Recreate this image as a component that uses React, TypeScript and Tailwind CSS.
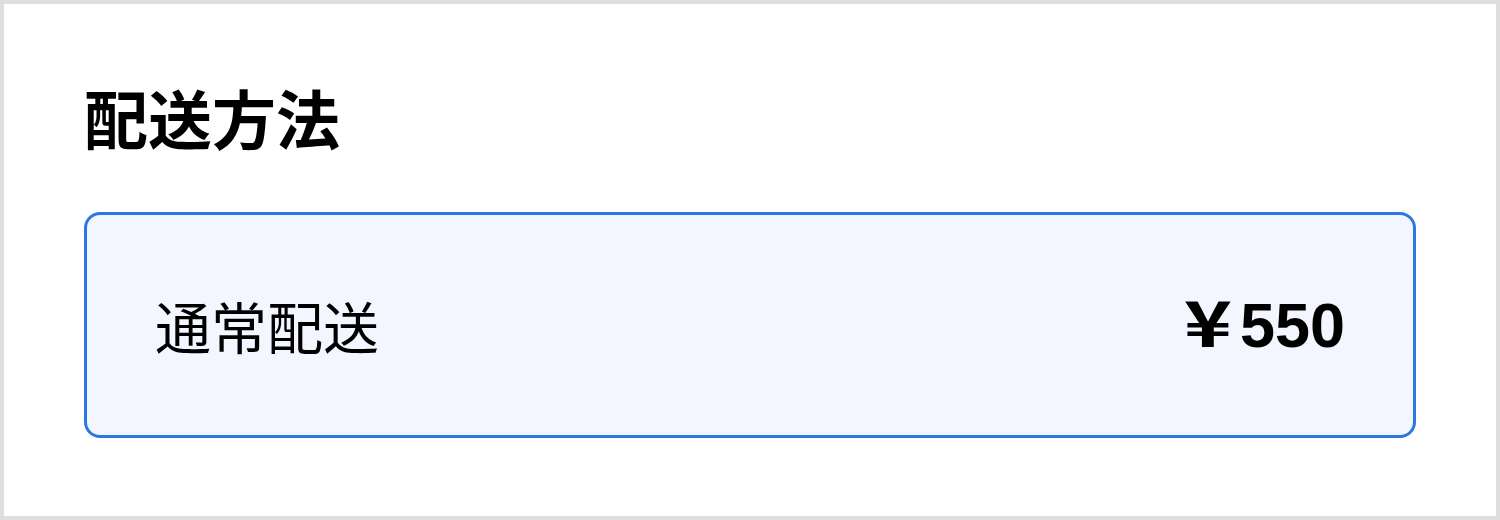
export default function App() {
  return (
    <div className="w-[1500px] h-[520px] box-border border-[4px] border-[#dedede] bg-white px-[80px] pt-[80px] font-['Noto_Sans_CJK_JP','Liberation_Sans',sans-serif] text-black">
      <h1 className="text-[64px] leading-none font-bold">配送方法</h1>
      <div className="mt-[64px] h-[226px] rounded-[16px] border-[3px] border-[#2a78e0] bg-[#f3f6fe] flex items-center justify-between px-[68px]">
        <span className="text-[56px] leading-none">通常配送</span>
        <span className="flex items-baseline text-[63px] leading-none font-bold mb-[6px]">
          <span className="inline-block origin-right scale-x-[1.3] font-['Noto_Sans_CJK_JP',sans-serif] mr-[8px]">¥</span>
          <span className="font-['Liberation_Sans',sans-serif]">550</span>
        </span>
      </div>
    </div>
  );
}
